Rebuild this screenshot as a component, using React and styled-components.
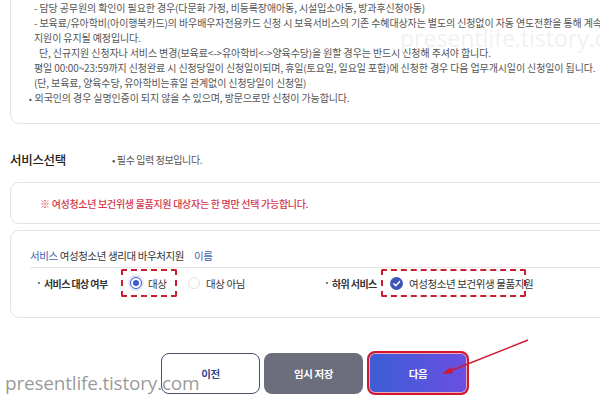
import { createGlobalStyle, styled } from "styled-components";

const INFO_LINES = [
  { text: "- 담당 공무원의 확인이 필요한 경우(다문화 가정, 비등록장애아동, 시설입소아동, 방과후신청아동)" },
  { text: "- 보육료/유아학비(아이행복카드)의 바우배우자전용카드 신청 시 보육서비스의 기존 수혜대상자는 별도의 신청없이 자동 연도전환을 통해 계속" },
  { text: "지원이 유지될 예정입니다." },
  { text: "단, 신규지원 신청자나 서비스 변경(보육료<->유아학비<->양육수당)을 원할 경우는 반드시 신청해 주셔야 합니다.", indent: 5 },
  { text: "평일 00:00~23:59까지 신청완료 시 신청당일이 신청일이되며, 휴일(토요일, 일요일 포함)에 신청한 경우 다음 업무개시일이 신청일이 됩니다." },
  { text: "(단, 보육료, 양육수당, 유아학비는휴일 관계없이 신청당일이 신청일)" },
  { text: "외국인의 경우 실명인증이 되지 않을 수 있으며, 방문으로만 신청이 가능합니다.", bullet: true },
];

const GlobalStyle = createGlobalStyle`
  body {
    margin: 0;
    background: #fff;
    overflow: hidden;
  }
`;

const App = () => {
  return (
    <>
      <GlobalStyle />
      <Page>
        <InfoBox>
          {INFO_LINES.map((line, index) => (
            <InfoLine key={index} $indent={line.indent} $bullet={line.bullet}>
              {line.text}
            </InfoLine>
          ))}
        </InfoBox>

        <SectionHead>
          <SectionTitle>서비스선택</SectionTitle>
          <Required>• 필수 입력 정보입니다.</Required>
        </SectionHead>

        <AlertBox>
          <AlertText>※ 여성청소년 보건위생 물품지원 대상자는 한 명만 선택 가능합니다.</AlertText>
        </AlertBox>

        <ServiceBox>
          <ServiceTitle>
            <Blue>서비스</Blue> 여성청소년 생리대 바우처지원 <Blue $gap>이름</Blue>
          </ServiceTitle>
          <OptionRow>
            <Group>
              <RowLabel $width={83}>서비스 대상 여부</RowLabel>
              <Highlight $width={56}>
                <Option>
                  <Radio $checked />
                  대상
                </Option>
              </Highlight>
              <Option $offset={11}>
                <Radio />
                대상 아님
              </Option>
            </Group>
            <RowLabel $width={55}>하위 서비스</RowLabel>
            <Highlight $width={145}>
              <Option>
                <CheckIcon viewBox="0 0 14 14">
                  <circle cx="7" cy="7" r="7" fill="#3d55b6" />
                  <path d="M4 7.2 L6.2 9.3 L10.2 5" fill="none" stroke="#fff" strokeWidth="1.6" strokeLinecap="round" strokeLinejoin="round" />
                </CheckIcon>
                여성청소년 보건위생 물품지원
              </Option>
            </Highlight>
          </OptionRow>
        </ServiceBox>

        <ButtonRow>
          <PrevButton>이전</PrevButton>
          <SaveButton>임시 저장</SaveButton>
          <NextButton>다음</NextButton>
        </ButtonRow>

        <Arrow viewBox="0 0 90 40">
          <line x1="88" y1="2" x2="10" y2="33" stroke="#d0182e" strokeWidth="1.4" />
          <polygon points="2,36 11,29 13,35" fill="#d0182e" />
        </Arrow>

        <Watermark>presentlife.tistory.com</Watermark>
        <FaintMark>presentlife.tistory.com</FaintMark>
      </Page>
    </>
  );
};

export default App;

const Page = styled.div`
  position: relative;
  width: 600px;
  height: 400px;
  overflow: hidden;
  box-sizing: border-box;
  padding-left: 10px;
  font-family: "Noto Sans CJK KR", "Noto Sans", sans-serif;
  color: #333;
`;

const InfoBox = styled.div`
  width: 620px;
  box-sizing: border-box;
  border: 1px solid #e3e3e3;
  border-top: none;
  border-radius: 0 0 0 9px;
  padding: 0 0 17px 23px;
`;

const InfoLine = styled.p`
  margin: 0;
  padding-left: ${(p) => p.$indent || 0}px;
  font-size: 10px;
  line-height: 15px;
  letter-spacing: -0.12px;
  color: #555;
  white-space: nowrap;

  &::before {
    content: ${(p) => (p.$bullet ? '"•"' : "none")};
    margin-left: -5px;
    margin-right: 3px;
    font-size: 8px;
    color: #444;
  }
`;

const SectionHead = styled.div`
  display: flex;
  align-items: center;
  height: 20px;
  margin-top: 25px;
`;

const SectionTitle = styled.h3`
  width: 102px;
  margin: 0;
  font-size: 12.5px;
  font-weight: 500;
  letter-spacing: -0.3px;
  color: #222;
`;

const Required = styled.span`
  font-size: 10px;
  letter-spacing: -0.4px;
  color: #555;
`;

const AlertBox = styled.div`
  display: flex;
  align-items: center;
  width: 620px;
  height: 42px;
  box-sizing: border-box;
  margin-top: 13px;
  padding-left: 29px;
  border: 1px solid #e3e3e3;
  border-radius: 9px 0 0 9px;
`;

const AlertText = styled.p`
  margin: 0;
  font-size: 10px;
  font-weight: 500;
  letter-spacing: -0.3px;
  color: #d3364b;
`;

const ServiceBox = styled.div`
  width: 620px;
  box-sizing: border-box;
  margin-top: 6px;
  padding: 18px 0 20px 19px;
  border: 1px solid #e3e3e3;
  border-radius: 9px 0 0 9px;
`;

const ServiceTitle = styled.div`
  padding-bottom: 4px;
  border-bottom: 1px solid #e3e3e3;
  font-size: 10.5px;
  line-height: 14px;
  letter-spacing: -0.4px;
  color: #333;
`;

const Blue = styled.span`
  margin-left: ${(p) => (p.$gap ? "8px" : "0")};
  color: #4463b4;
`;

const OptionRow = styled.div`
  display: flex;
  align-items: center;
  height: 28px;
  margin-top: 1px;
  padding-left: 8px;
`;

const Group = styled.div`
  display: flex;
  align-items: center;
  width: 288px;
`;

const RowLabel = styled.span`
  display: flex;
  align-items: center;
  width: ${(p) => p.$width}px;
  flex-shrink: 0;
  font-size: 10px;
  font-weight: 700;
  letter-spacing: -0.6px;
  color: #333;
  white-space: nowrap;

  &::before {
    content: "";
    width: 2px;
    height: 2px;
    margin-right: 4px;
    border-radius: 50%;
    background: #555;
  }
`;

const Highlight = styled.div`
  display: flex;
  align-items: center;
  width: ${(p) => p.$width}px;
  height: 28px;
  box-sizing: border-box;
  padding-left: 7px;
  border: 2px dashed #c71f30;
  border-radius: 2px;
`;

const Option = styled.label`
  display: flex;
  align-items: center;
  gap: 6px;
  margin-left: ${(p) => p.$offset || 0}px;
  font-size: 10.5px;
  letter-spacing: -0.4px;
  color: #333;
  white-space: nowrap;
`;

const Radio = styled.span`
  display: flex;
  align-items: center;
  justify-content: center;
  width: 12px;
  height: 12px;
  box-sizing: border-box;
  border-radius: 50%;
  border: 1px solid ${(p) => (p.$checked ? "#3c5bd0" : "#e0e0e0")};
  box-shadow: ${(p) => (p.$checked ? "0 0 0 2px rgba(60, 91, 208, 0.15)" : "none")};
  background: #fff;

  &::after {
    content: "";
    display: ${(p) => (p.$checked ? "block" : "none")};
    width: 6px;
    height: 6px;
    border-radius: 50%;
    background: #3c5bd0;
  }
`;

const CheckIcon = styled.svg`
  width: 13px;
  height: 13px;
  flex-shrink: 0;
`;

const ButtonRow = styled.div`
  display: flex;
  align-items: center;
  justify-content: center;
  gap: 4px;
  margin-top: 33px;
  padding-left: 20px;
`;

const BaseButton = styled.button`
  width: 99px;
  height: 41px;
  border-radius: 8px;
  font-family: "Noto Sans CJK KR", sans-serif;
  font-size: 10.5px;
  font-weight: 700;
  letter-spacing: -0.4px;
  cursor: pointer;
`;

const PrevButton = styled(BaseButton)`
  border: 1px solid #4b506b;
  background: #fff;
  color: #33428c;
`;

const SaveButton = styled(BaseButton)`
  border: none;
  background: #6c6e7c;
  color: #fff;
`;

const NextButton = styled(BaseButton)`
  width: 102px;
  height: 44px;
  border: 2px solid #d0182e;
  box-shadow: inset 0 0 0 1px #f0a6b8;
  background: linear-gradient(90deg, #3c5ed6, #6a4fe2);
  color: #fff;
`;

const Arrow = styled.svg`
  position: absolute;
  left: 440px;
  top: 338px;
  width: 90px;
  height: 40px;
`;

const Watermark = styled.span`
  position: absolute;
  left: 5px;
  top: 370px;
  font-family: "Open Sans", "Noto Sans", sans-serif;
  font-size: 19px;
  letter-spacing: -0.2px;
  color: rgba(120, 120, 120, 0.75);
  pointer-events: none;
`;

const FaintMark = styled.span`
  position: absolute;
  left: 400px;
  top: 22px;
  font-family: "Open Sans", "Noto Sans", sans-serif;
  font-size: 23px;
  color: rgba(190, 190, 190, 0.22);
  pointer-events: none;
`;
